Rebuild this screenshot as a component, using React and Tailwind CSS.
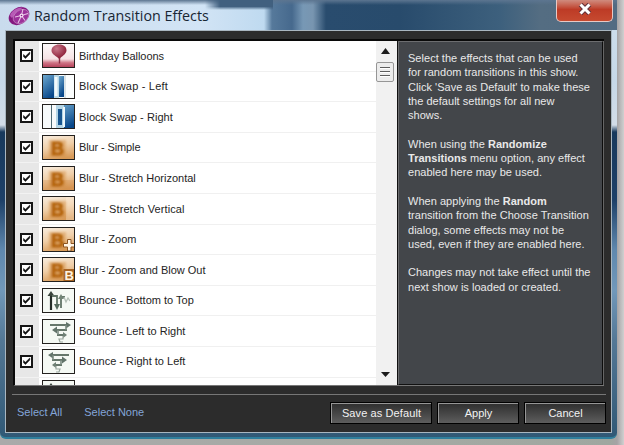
import clsx from "clsx";

const EFFECTS = [
  { name: "Birthday Balloons", icon: "balloon", tracking: "tracking-[-0.03px]" },
  { name: "Block Swap - Left", icon: "swapLeft", tracking: "tracking-[0.2px]" },
  { name: "Block Swap - Right", icon: "swapRight", tracking: "tracking-[0.05px]" },
  { name: "Blur - Simple", icon: "blur", tracking: "tracking-[-0.12px]" },
  { name: "Blur - Stretch Horizontal", icon: "blurH", tracking: "tracking-[0px]" },
  { name: "Blur - Stretch Vertical", icon: "blurV", tracking: "tracking-[0.1px]" },
  { name: "Blur - Zoom", icon: "blurZoom", tracking: "tracking-[0px]" },
  { name: "Blur - Zoom and Blow Out", icon: "blurOut", tracking: "tracking-[0px]" },
  { name: "Bounce - Bottom to Top", icon: "bounceUp", tracking: "tracking-[0px]" },
  { name: "Bounce - Left to Right", icon: "bounceRight", tracking: "tracking-[0px]" },
  { name: "Bounce - Right to Left", icon: "bounceLeft", tracking: "tracking-[0px]" },
  { name: "", icon: "bounceUp" },
];

const HELP = [
  ["Select the effects that can be used", "for random transitions in this show.", "Click 'Save as Default' to make these", "the default settings for all new", "shows."],
  [<>When using the <b>Randomize</b></>, <><b>Transitions</b> menu option, any effect</>, "enabled here may be used."],
  [<>When applying the <b>Random</b></>, "transition from the Choose Transition", "dialog, some effects may not be", "used, even if they are enabled here."],
  ["Changes may not take effect until the", "next show is loaded or created."],
];

// shared gradients for the effect thumbnails
function Defs() {
  return (
    <svg className="absolute size-0">
      <defs>
        <linearGradient id="amber" x1="0" y1="0" x2="0.3" y2="1">
          <stop offset="0" stopColor="#f8ecde" />
          <stop offset="0.5" stopColor="#efcfaa" />
          <stop offset="1" stopColor="#d89a58" />
        </linearGradient>
        <linearGradient id="blue" x1="0" y1="0" x2="0.4" y2="1">
          <stop offset="0" stopColor="#6fa9cf" />
          <stop offset="1" stopColor="#08478a" />
        </linearGradient>
        <linearGradient id="rose" x1="0" y1="0" x2="0" y2="1">
          <stop offset="0" stopColor="#fdfafa" />
          <stop offset="0.6" stopColor="#f5e2e4" />
          <stop offset="0.75" stopColor="#cf7485" />
          <stop offset="1" stopColor="#a92c48" />
        </linearGradient>
        <radialGradient id="balloon" cx="0.35" cy="0.3" r="0.7">
          <stop offset="0" stopColor="#c9788a" />
          <stop offset="1" stopColor="#8c1f37" />
        </radialGradient>
        <filter id="soft" x="-30%" y="-30%" width="160%" height="160%">
          <feGaussianBlur stdDeviation="1" />
        </filter>
      </defs>
    </svg>
  );
}

function BlurArt({ type }) {
  return (
    <>
      <rect width="32" height="25" fill="url(#amber)" />
      {type === "blurH" && <rect y="13" width="32" height="12" fill="#cf8138" opacity="0.25" />}
      {type === "blurV" && <rect x="23" width="9" height="25" fill="#fff1df" opacity="0.35" />}
      <g filter="url(#soft)">
        <rect x="6" y="4" width="17" height="17" fill="#d08838" opacity="0.45" />
        <text x="8" y="18.500" fontSize="18" fontWeight="bold" fontFamily="Liberation Sans, sans-serif" fill="#b4640f" stroke="#b4640f">B</text>
      </g>
      {type === "blurZoom" && (
        <path d="M24.500 11.500h3.500v4h4v3.500h-4v4h-3.500v-4h-4v-3.500h4z" fill="#fff4e4" stroke="#8d5420" strokeWidth="1" />
      )}
      {type === "blurOut" && (
        <>
          <rect x="20.500" y="11" width="11.500" height="14" fill="#a86423" />
          <text x="21.500" y="21.800" fontSize="13" fontWeight="bold" fontFamily="Liberation Sans, sans-serif" fill="#fff3df">B</text>
        </>
      )}
    </>
  );
}

function SidewaysArrows() {
  return (
    <>
      <path d="M7 5h19M12 10h12M14 15h8" fill="none" stroke="#66776b" strokeWidth="1.8" />
      <path d="M23 2l5 3-5 3.500zM14 6.500L9 10l5 3.500z" fill="#62746a" />
      <path d="M23 5v5M15 10v5" fill="none" stroke="#7b8b80" strokeWidth="1.6" />
      <path d="M20 12l4 3-4 3z" fill="#6f8075" />
      <path d="M20 16v3h-4l1 3h3" fill="none" stroke="#9aa69d" strokeWidth="1.2" />
    </>
  );
}

function EffectIcon({ type }) {
  return (
    <svg viewBox="0 0 31 23" preserveAspectRatio="none" className="h-[25px] w-[33px] shrink-0 border border-[#24211f] bg-[#f5f9f4]">
      {type === "balloon" && (
        <>
          <rect width="32" height="25" fill="url(#rose)" />
          <path d="M16 .5c5 0 7.500 2.500 7.500 6-.5 4-4.500 5.500-6.500 8h-1.500c-2-2.500-7-4-7-8C8.500 3 12 .5 16 .5z" fill="url(#balloon)" />
          <path d="M16.500 14v5.500" stroke="#892d43" strokeWidth="1.4" />
        </>
      )}
      {type === "swapLeft" && (
        <>
          <rect width="32" height="25" fill="#fbfdfd" />
          <rect width="11" height="25" fill="url(#blue)" />
          <rect x="11" width="5" height="25" fill="#b9d9e8" />
          <rect x="11.500" y="2" width="3" height="19" fill="#f2f9fb" />
          <rect x="16" y="1" width="5" height="21" fill="url(#blue)" />
          <path d="M22 0v25" stroke="#a9bdc7" strokeWidth="0.8" />
        </>
      )}
      {type === "swapRight" && (
        <>
          <rect width="32" height="25" fill="#f7fafb" />
          <path d="M8.500 0v25" stroke="#4d6873" />
          <rect x="13" width="19" height="25" fill="url(#blue)" />
          <rect x="13" width="8" height="25" fill="#b4d5e6" />
          <rect x="15" y="4" width="4" height="16" fill="#17558f" />
          <rect x="20" y="2" width="2" height="20" fill="#ecf6fa" />
        </>
      )}
      {type.startsWith("blur") && <BlurArt type={type} />}
      {type === "bounceUp" && (
        <>
          <path d="M8 5v16" stroke="#252d28" strokeWidth="2.2" />
          <path d="M4.500 7L8 2l3.500 5z" fill="#39443c" />
          <path d="M9 7h5v10M18 19V8h4" fill="none" stroke="#637568" strokeWidth="1.8" />
          <path d="M11 15h6l-3 6z" fill="#566b5e" />
          <path d="M15 10l3-5 3 5z" fill="#728476" />
          <path d="M21 8l2 5 2-4 2 3" fill="none" stroke="#b2bdb4" strokeWidth="1.3" />
        </>
      )}
      {type === "bounceRight" && <SidewaysArrows />}
      {type === "bounceLeft" && <g transform="translate(33 0) scale(-1 1)"><SidewaysArrows /></g>}
    </svg>
  );
}

function Checkbox() {
  return (
    <svg viewBox="0 0 13 13" className="size-[13px] shrink-0">
      <rect x="1" y="1" width="11" height="11" fill="#fff" stroke="#161616" strokeWidth="2" />
      <path d="M3.500 5.500v2.200L5.500 9.500 9.800 5V3L5.500 7.200z" fill="#111" stroke="#111" strokeWidth="0.5" />
    </svg>
  );
}

function EffectRow({ effect }) {
  return (
    <div className="flex h-[30.6px] shrink-0">
      <div className="flex w-6 shrink-0 items-center border-b border-[#f2f2f2] bg-[#e7e7e7] pl-[5px]">
        <Checkbox />
      </div>
      <div className="flex flex-1 items-center gap-1 border-b border-[#f0f0f0] pl-[3px]">
        <EffectIcon type={effect.icon} />
        <span className={clsx("whitespace-nowrap text-[11px] text-[#242424]", effect.tracking)}>{effect.name}</span>
      </div>
    </div>
  );
}

function ScrollBar() {
  return (
    <div className="flex w-[21px] shrink-0 flex-col items-center justify-between bg-[#f1f1f1] pt-[7px] pr-[3px] pb-2">
      <div className="flex flex-col items-center gap-2">
        <svg viewBox="0 0 9 6" className="h-[6px] w-[9px]"><path d="M0 6l4.500-6L9 6z" fill="#1c1c1c" /></svg>
        <svg viewBox="0 0 18 20" className="h-5 w-[18px]">
          <rect x="0.500" y="0.500" width="17" height="19" rx="1.500" fill="#ececec" stroke="#969696" />
          <path d="M4 5.500h10M4 9.500h10M4 13.500h10" stroke="#5d5d5d" />
          <path d="M4 6.500h10M4 10.500h10M4 14.500h10" stroke="#fff" />
        </svg>
      </div>
      <svg viewBox="0 0 9 5" className="h-[5px] w-[9px]"><path d="M0 0h9L4.500 5z" fill="#1c1c1c" /></svg>
    </div>
  );
}

function DarkButton({ className, children }) {
  return (
    <button className={clsx("h-[22px] border border-black bg-[#2c2c2c] text-[11px] text-[#f2f2f2]", className)}>
      <span className="flex h-full items-center justify-center border-t border-l border-t-[#969696] border-l-[#969696] bg-linear-to-b from-[#303030] to-[#5e5e5e]">
        {children}
      </span>
    </button>
  );
}

function TitleBar() {
  return (
    <header className="relative flex h-[30px] shrink-0 items-start justify-between overflow-hidden bg-[linear-gradient(90deg,#c9dbed_0px,#d2e4f5_200px,#bfdaf0_264px,#56799b_272px,#46698d_292px,#7798b5_303px,#7895b0_313px,#294c6e_326px,#284b6c_400px,#3d607d_500px,#546d82_540px,#526b82_616px)]">
      <div className="absolute inset-x-0 top-0 h-[5px] bg-linear-to-b from-[#5c7590] to-transparent" />
      <div className="absolute top-0 left-[205px] h-[10px] w-[68px] bg-[linear-gradient(180deg,#41607f_65%,transparent)] mask-[linear-gradient(90deg,transparent,#000_15px)]" />
      <div className="relative flex items-center gap-1 pt-1 pl-2">
        <svg viewBox="0 0 22 20" className="h-5 w-[22px]">
          <ellipse cx="11" cy="10" rx="11" ry="8.300" transform="rotate(-32 11 10)" fill="#84197f" />
          <path d="M2 10C3 5 9 1 15 1.500L9.500 5.500 4 12z" fill="#b85bb6" />
          <ellipse cx="13" cy="10.500" rx="8.500" ry="6.300" transform="rotate(-36 13 10.500)" fill="#9c319a" stroke="#c587c3" strokeWidth="0.7" />
          <path d="M13.500 9.500L15 3M13.500 9.500l6.500-2M13.500 9.500l3.500 5M13.500 9.500L10 17M13.500 9.500L7 11" stroke="#e6bfe4" strokeWidth="1.1" />
          <circle cx="13.500" cy="9.500" r="2" fill="#f3dff2" />
          <circle cx="13.500" cy="9.500" r="0.800" fill="#8c1f8a" />
        </svg>
        <h1 className="font-[Open_Sans,sans-serif] text-[14.3px] leading-[23px] whitespace-nowrap text-[#182634]">Random Transition Effects</h1>
      </div>
      <button className="relative mr-1 flex h-[22px] w-[57px] items-start justify-center rounded-b-[5px] border border-t-0 border-[#e8c9c5] bg-linear-to-b from-[#cf8b7e] via-[#bd3b26] via-45% to-[#c64a30] pt-[3px]">
        <svg viewBox="0 0 14 12" className="h-3 w-3.5">
          <path d="M2.500 1.500l9 9M11.500 1.500l-9 9" stroke="#63323a" strokeWidth="5" />
          <path d="M2.500 1.500l9 9M11.500 1.500l-9 9" stroke="#fff" strokeWidth="3" />
        </svg>
      </button>
    </header>
  );
}

export default function App() {
  return (
    <div className="h-[445px] w-[624px] overflow-hidden bg-[linear-gradient(90deg,#aaa_0,#a5aaa4_60%,#9fa7a0_610px,#a5a3a5_617px,#d0d0d0_624px)] font-[Liberation_Sans,Arial,sans-serif]">
      <Defs />
      <main className="flex h-[439px] w-[617px] flex-col overflow-hidden rounded-b-md border-b-2 border-[#2f7f9c] bg-[linear-gradient(180deg,#d0e0ed_0px,#c6d8e8_80px,#d2dce7_125px,#18395c_132px,#1d4068_200px,#5f88ae_250px,#7198ba_290px,#547896_340px,#305875_439px)]">
        <TitleBar />
        <section className="mx-[5px] flex h-[403px] shrink-0 flex-col border border-[#a9b6c0] bg-[#2c2c2c]">
          <div className="mx-[7px] mt-2 flex h-[347px] shrink-0 border-t-2 border-b border-l-2 border-[#090909] border-b-[#777]">
            <div className="flex min-w-0 flex-1 overflow-hidden bg-white">
              <div className="flex min-w-0 flex-1 flex-col overflow-hidden">
                {EFFECTS.map((effect, i) => <EffectRow key={i} effect={effect} />)}
              </div>
              <ScrollBar />
            </div>
            <div className="flex w-[207px] shrink-0 border-r border-l border-r-[#666] border-l-[#111]">
              <aside className="flex flex-1 flex-col gap-[14.3px] border border-t-[#6c6d6f] border-r-[#0c0c0c] border-b-[#111] border-l-[#6c6d6f] bg-[#43464a] pt-[9px] pl-[9px] text-[11px] leading-[14.3px] tracking-[0.03px] text-[#e9e9e9]">
                {HELP.map((lines, i) => (
                  <p key={i}>{lines.map((line, j) => <span key={j} className="block whitespace-nowrap">{line}</span>)}</p>
                ))}
              </aside>
            </div>
          </div>
          <footer className="ml-1.5 mr-[5px] mt-2 flex items-start justify-between border-t border-[#777] pt-[7px]">
            <nav className="flex gap-[22px] pt-[3px] pl-[5px] text-[11px] leading-[15px] text-[#83a5d8]">
              <a>Select All</a>
              <a>Select None</a>
            </nav>
            <div className="flex gap-[5px]">
              <DarkButton className="w-[102px] tracking-[0.1px]">Save as Default</DarkButton>
              <DarkButton className="w-[82px]">Apply</DarkButton>
              <DarkButton className="w-[82px]">Cancel</DarkButton>
            </div>
          </footer>
        </section>
      </main>
    </div>
  );
}
